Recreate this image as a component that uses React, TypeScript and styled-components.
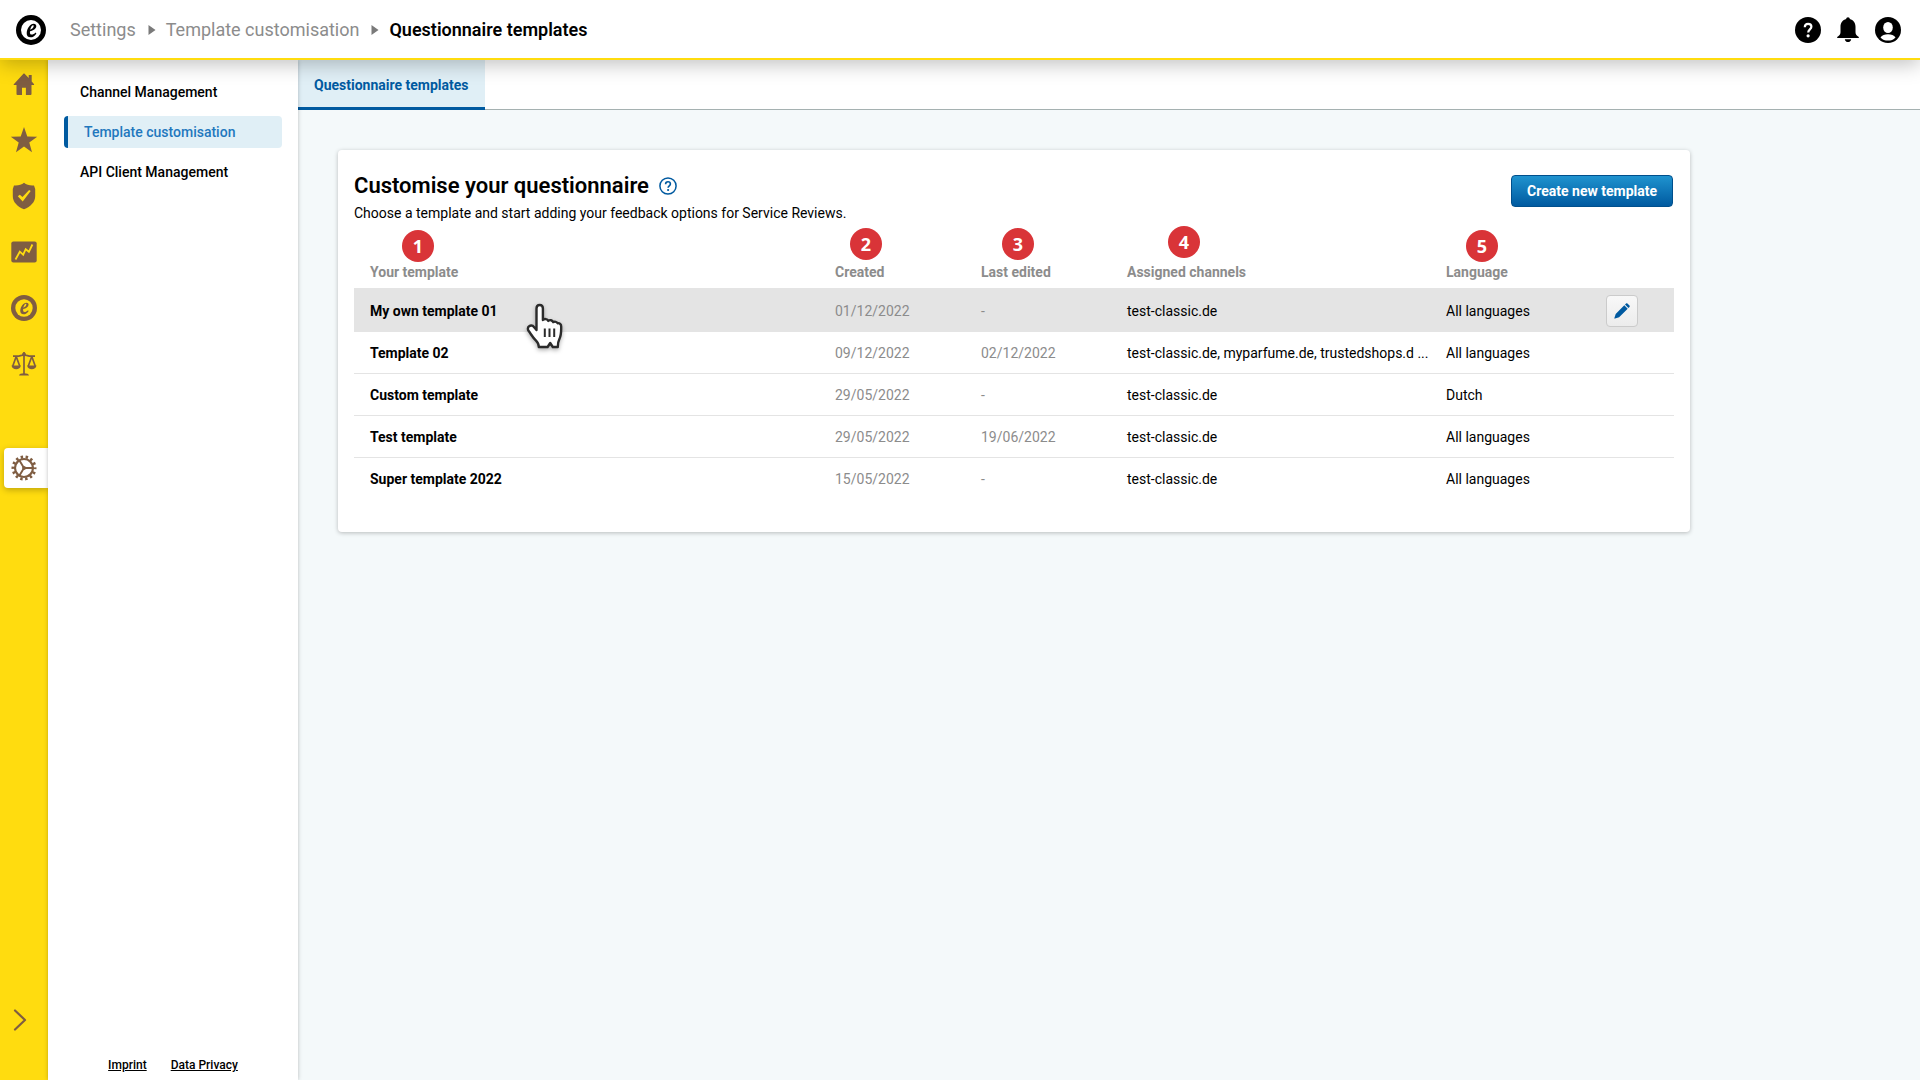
import React from "react";
import styled, { createGlobalStyle } from "styled-components";

const GlobalStyle = createGlobalStyle`
  *, *::before, *::after { box-sizing: border-box; }
  body { margin: 0; font-family: Roboto, "Liberation Sans", sans-serif; font-size: 14px; line-height: 20px; color: #000; background: #f4f9fa; }
  button { font: inherit; cursor: pointer; }
  h1, p, ul, ol { margin: 0; padding: 0; list-style: none; }
  svg { display: block; flex: none; }
`;

const BROWN = "#7f5d42";
const BLUE = "#005aa0";

const Page = styled.div`
  min-height: 100vh;
  display: flex;
  flex-direction: column;
`;

const TopBar = styled.header`
  position: relative;
  z-index: 2;
  height: 60px;
  display: flex;
  align-items: center;
  justify-content: space-between;
  padding: 2px 16px 0;
  background: #fff;
  border-bottom: 2px solid #ffdc0f;
  box-shadow: 0 4px 20px rgba(0, 0, 0, 0.25);
`;

const TopLeft = styled.div`
  display: flex;
  align-items: center;
  gap: 24px;
`;

const Crumbs = styled.ol`
  display: flex;
  align-items: center;
  gap: 10px;
  font-size: 18px;
  line-height: 24px;
`;

const Crumb = styled.li`
  display: flex;
  align-items: center;
  gap: 12px;
`;

const CrumbLink = styled.a`
  color: #8c8c8c;
  text-decoration: none;
`;

const CrumbCurrent = styled.span`
  font-weight: 600;
`;

const TopActions = styled.div`
  display: flex;
  gap: 8px;
`;

const IconButton = styled.button`
  width: 32px;
  height: 32px;
  padding: 0;
  border: 0;
  background: none;
  display: grid;
  place-items: center;
`;

const Body = styled.div`
  flex: 1;
  display: flex;
`;

const Rail = styled.nav`
  width: 48px;
  display: flex;
  flex-direction: column;
  justify-content: space-between;
  background: #ffdc0f;
  padding: 4px 0 44px;
`;

const RailList = styled.ul`
  display: flex;
  flex-direction: column;
`;

const RailItem = styled.li<{ $last?: boolean }>`
  height: ${(p) => (p.$last ? 104 : 56)}px;
`;

const RailLink = styled.a<{ $active?: boolean }>`
  height: 40px;
  display: flex;
  align-items: center;
  justify-content: center;
  margin-left: ${(p) => (p.$active ? 4 : 0)}px;
  padding-right: ${(p) => (p.$active ? 4 : 0)}px;
  border-radius: 4px 0 0 4px;
  background: ${(p) => (p.$active ? "#fff" : "transparent")};
  box-shadow: ${(p) => (p.$active ? "0 2px 6px rgba(0, 0, 0, 0.25)" : "none")};
`;

const Expand = styled(IconButton)`
  margin-left: 4px;
`;

const SideMenu = styled.aside`
  position: relative;
  z-index: 1;
  width: 250px;
  display: flex;
  flex-direction: column;
  justify-content: space-between;
  padding: 16px 16px 5px;
  background: #fff;
  box-shadow: 0 0 4px rgba(0, 0, 0, 0.25);
`;

const MenuList = styled.ul`
  display: flex;
  flex-direction: column;
  gap: 8px;
`;

const MenuLink = styled.a<{ $active?: boolean }>`
  height: 32px;
  display: flex;
  align-items: center;
  padding-left: 16px;
  border-left: ${(p) => (p.$active ? `4px solid ${BLUE}` : "0")};
  border-radius: 4px;
  background: ${(p) => (p.$active ? "#e0eff6" : "transparent")};
  color: ${(p) => (p.$active ? "#1f78be" : "#000")};
  font-weight: 500;
  text-decoration: none;
`;

const Legal = styled.div`
  display: flex;
  justify-content: center;
  gap: 24px;
  font-size: 12px;
  font-weight: 500;
`;

const LegalLink = styled.a`
  color: #000;
`;

const Main = styled.main`
  flex: 1;
  min-width: 0;
`;

const Tabs = styled.div`
  height: 50px;
  display: flex;
  background: #fff;
  box-shadow: inset 0 -1px 0 #a5b1b1;
`;

const Tab = styled.a`
  height: 50px;
  padding: 0 16px;
  line-height: 50px;
  background: #e0eff6;
  box-shadow: inset 0 -3px 0 ${BLUE};
  color: ${BLUE};
  font-weight: 700;
  text-decoration: none;
`;

const Card = styled.section`
  max-width: 1352px;
  margin: 40px;
  padding: 16px 16px 32px;
  background: #fff;
  border-radius: 4px;
  box-shadow: 0 1px 4px rgba(0, 0, 0, 0.25);
`;

const CardHead = styled.div`
  display: flex;
  justify-content: space-between;
  align-items: flex-start;
  padding: 9px 1px 0 0;
`;

const TitleRow = styled.div`
  display: flex;
  align-items: center;
  gap: 8px;
`;

const Title = styled.h1`
  font-size: 22px;
  line-height: 22px;
  font-weight: 600;
`;

const HelpButton = styled(IconButton)`
  width: 22px;
  height: 22px;
`;

const Intro = styled.p`
  padding-top: 6px;
`;

const PrimaryButton = styled.button`
  height: 32px;
  padding: 0 15px;
  border: 1px solid #004f8c;
  border-radius: 4px;
  background: linear-gradient(#1f93cf, ${BLUE});
  color: #fff;
  font-weight: 700;
`;

const Table = styled.table`
  width: 100%;
  margin-top: 24px;
  table-layout: fixed;
  border-collapse: separate;
  border-spacing: 0;
  text-align: left;
`;

const Col = styled.col<{ $w?: number }>`
  width: ${(p) => (p.$w ? `${p.$w}px` : "auto")};
`;

const HeadCell = styled.th`
  position: relative;
  height: 41px;
  padding: 9px 0 0 16px;
  color: #8c8c8c;
  font-weight: 700;
`;

const Marker = styled.span<{ $x: number; $y: number }>`
  position: absolute;
  left: ${(p) => p.$x}px;
  top: ${(p) => p.$y}px;
  width: 32px;
  height: 32px;
  border-radius: 50%;
  background: #d93438;
  color: #fff;
  font: 700 18px/32px "Open Sans", "Noto Sans", sans-serif;
  text-align: center;
`;

const Row = styled.tr<{ $hover?: boolean }>`
  height: ${(p) => (p.$hover ? 44 : 42)}px;
  background: ${(p) => (p.$hover ? "#e4e4e4" : "transparent")};

  td { border-bottom: ${(p) => (p.$hover ? "0" : "1px solid #e4e4e4")}; }
  &:last-child td { border-bottom-color: transparent; }
`;

const Cell = styled.td<{ $muted?: boolean; $strong?: boolean }>`
  position: relative;
  padding: 1px 0 0 16px;
  color: ${(p) => (p.$muted ? "#8c8c8c" : "#000")};
  font-weight: ${(p) => (p.$strong ? 700 : 400)};
  white-space: nowrap;
`;

const EditButton = styled.button`
  width: 32px;
  height: 32px;
  padding: 0;
  display: grid;
  place-items: center;
  border: 1px solid #cbcbcb;
  border-radius: 4px;
  background: linear-gradient(#f8f8f8, #ececec);
`;

const Pointer = styled.svg`
  position: absolute;
  left: 172px;
  top: 15px;
  z-index: 1;
  filter: drop-shadow(0 2px 2px rgba(0, 0, 0, 0.3));
`;

const Mark = ({ size, color, back }: { size: number; color: string; back: string }) => (
  <svg width={size} height={size} viewBox="0 0 30 30" aria-hidden="true">
    <circle cx="15" cy="15" r="15" fill={color} />
    <circle cx="15" cy="15" r="10" fill={back} />
    <path
      d="M20.400 18.400c-1.700 2.500-3.700 3.900-5.900 3.900-2.500 0-4-1.600-3.800-4.300.3-4.500 3.400-9.200 7-9.200 1.700 0 2.700.9 2.600 2.400-.2 2.700-3 4.300-6.300 5-.3 2.200.2 3.400 1.700 3.400 1.300 0 2.600-.7 3.900-2.100zM14.200 14.700c2-.6 3.300-2 3.500-3.600.1-.6-.1-.9-.6-.9-1.100 0-2.400 2.100-2.900 4.500z"
      fill={color}
    />
  </svg>
);

const Arrow = () => (
  <svg width="8" height="10" viewBox="0 0 8 10" aria-hidden="true">
    <path d="M0.500 0L7.500 5L0.500 10z" fill="#7a7a7a" />
  </svg>
);

const HomeIcon = () => (
  <svg width="24" height="24" viewBox="0 0 24 24" fill={BROWN} aria-hidden="true">
    <path d="M11.400 1.700L1.800 12.200c-.3.500-.1.900.5.900H4.500v9c0 .6.300.9.900.9h4.600v-7.200h3.900V23h4.700c.6 0 .9-.3.900-.9v-9h2c.6 0 .8-.5.400-1L19.700 9.400V3h-3v3L12.600 1.700c-.4-.4-.8-.4-1.200 0z" />
  </svg>
);

const StarIcon = () => (
  <svg width="28" height="28" viewBox="0 0 28 28" fill={BROWN} aria-hidden="true">
    <path d="M14 1l3.300 9.400L27.200 10.700 19.300 16.500 22 26.200 14 20.400 6 26.200 8.700 16.500.8 10.700 10.700 10.400z" />
  </svg>
);

const ShieldIcon = () => (
  <svg width="24" height="28" viewBox="0 0 24 28" aria-hidden="true">
    <path d="M12 .8c2.600 2.300 6 3 10 2.700l1.200 3.500v7c0 6-4.400 10.600-11.200 13.200C5.200 24.600.8 20 .8 14V7L2 3.500C6 3.800 9.400 3.100 12 .8z" fill={BROWN} />
    <path d="M5.800 14.200l2-1.500 2.700 2.300 6.600-6.900 1.600 1-8 10.400z" fill="#ffdc0f" />
  </svg>
);

const ChartIcon = () => (
  <svg width="26" height="22" viewBox="0 0 26 22" aria-hidden="true">
    <rect x="0.300" y="0.500" width="25.400" height="21" rx="2" fill={BROWN} />
    <path d="M4.500 18.500l4.300-7.800 3.400 3 2.500-5.500 3.200 2.600 3.500-7.300" fill="none" stroke="#ffdc0f" strokeWidth="1.800" />
  </svg>
);

const ScaleIcon = () => (
  <svg width="26" height="26" viewBox="0 0 26 26" fill="none" stroke={BROWN} strokeWidth="1.700" aria-hidden="true">
    <path d="M13 1v22M2 5.200h4.500c2.500 0 3.500-1.200 6.500-1.200s4 1.200 6.500 1.200H24M5.200 5.500L1.800 15M5.200 5.500L8.700 15M20.800 5.500L17.300 15M20.800 5.500L24.200 15" />
    <path d="M.5 14.500h9.400c-.5 2.500-2.200 3.700-4.700 3.700S1 17 .5 14.500zM16.100 14.500h9.400c-.5 2.500-2.200 3.700-4.700 3.700s-4.200-1.200-4.700-3.700zM8 24.500c.3-1.500 2-2.200 5-2.200s4.700.7 5 2.200z" fill={BROWN} stroke="none" />
    <circle cx="13" cy="3.500" r="2" fill={BROWN} stroke="none" />
  </svg>
);

const GearIcon = () => (
  <svg width="26" height="26" viewBox="0 0 26 26" fill="none" stroke={BROWN} aria-hidden="true">
    <circle cx="13" cy="13" r="9" strokeWidth="2.200" />
    <circle cx="13" cy="13" r="11" strokeWidth="3" strokeDasharray="2.400 2.537" strokeDashoffset="1.200" />
    <path d="M13 13h9M13 13L8.300 5.200M13 13l-4.700 7.800" strokeWidth="1.900" />
    <circle cx="13" cy="13" r="1.900" fill={BROWN} stroke="none" />
  </svg>
);

const ChevronIcon = () => (
  <svg width="14" height="24" viewBox="0 0 14 24" fill="none" stroke={BROWN} strokeWidth="2.200" strokeLinecap="round" strokeLinejoin="round" aria-hidden="true">
    <path d="M2 2.500l10 9.500-10 9.500" />
  </svg>
);

const HelpIcon = () => (
  <svg width="26" height="26" viewBox="0 0 26 26" aria-hidden="true">
    <circle cx="13" cy="13" r="13" fill="#000" />
    <path d="M9.800 10.300c0-2.200 1.300-3.500 3.300-3.500s3.300 1.200 3.300 3c0 2.600-3.200 2.700-3.200 5.700" fill="none" stroke="#fff" strokeWidth="2.200" />
    <circle cx="13.100" cy="18.800" r="1.600" fill="#fff" />
  </svg>
);

const BellIcon = () => (
  <svg width="24" height="26" viewBox="0 0 24 26" aria-hidden="true">
    <path d="M12 .3c1 0 1.800.7 1.800 1.700 3.500.9 5.700 3.800 5.700 7.700v5.500c0 2.300 1.300 3.600 3.300 4.700v1H1.200v-1c2-1.100 3.300-2.400 3.300-4.700V9.700c0-3.900 2.200-6.800 5.700-7.700 0-1 .8-1.700 1.800-1.700zM8.800 22.200h6.400c-.3 1.900-1.500 2.800-3.200 2.800s-2.900-.9-3.200-2.800z" />
  </svg>
);

const UserIcon = () => (
  <svg width="26" height="26" viewBox="0 0 26 26" aria-hidden="true">
    <circle cx="13" cy="13" r="13" fill="#000" />
    <ellipse cx="13" cy="10.500" rx="4.800" ry="5.500" fill="#fff" />
    <path d="M5.500 20.400c1.500-2 4.100-3.100 7.500-3.100s6 1.100 7.500 3.100c-2 2.200-4.600 3.200-7.500 3.200s-5.500-1-7.500-3.200z" fill="#fff" />
  </svg>
);

const HelpOutlineIcon = () => (
  <svg width="18" height="18" viewBox="0 0 18 18" fill="none" stroke={BLUE} aria-hidden="true">
    <circle cx="9" cy="9" r="8.100" strokeWidth="1.500" />
    <path d="M6.600 7.200c0-1.600 1-2.500 2.400-2.500s2.400.9 2.400 2.200c0 1.800-2.300 2-2.300 3.900" strokeWidth="1.600" />
    <circle cx="9.100" cy="13" r="1.100" fill={BLUE} stroke="none" />
  </svg>
);

const PencilIcon = () => (
  <svg width="16" height="16" viewBox="0 0 16 16" fill={BLUE} aria-hidden="true">
    <path d="M10.300 2.300l3.400 3.400-8.600 8.600-4 1.300c-.5.200-.8-.1-.7-.6l1.300-4.100zM11 1.600l1.100-1.100c.4-.4.900-.4 1.300 0l2.100 2.100c.4.400.4.900 0 1.300L14.400 5z" />
  </svg>
);

const HandPointer = () => (
  <Pointer width="38" height="48" viewBox="0 0 38 48" aria-hidden="true">
    <path
      d="M10.500 27V5.500C10.500 3.500 11.800 2 13.700 2s3.200 1.500 3.200 3.500V17c1.500-1.600 4.500-1.200 5.300.9 1.600-1.300 4.300-.8 5 1.200 1.400-.8 3.500-.3 4.400 1.100 1.900-.3 3.700 1.200 3.600 3.500-.1 4.500.2 8.300-1.700 12-1.300 2.400-1.600 4.400-1.700 8.300h-5l-2.600-4-2.600 4h-8.800c0-3.200-.6-4.300-3-6.600-3.400-3.300-4.700-6.200-7.100-9.300-1.200-1.600-1.100-3.800.4-4.800 1.700-1.200 3.900-.6 5.300 1.200z"
      fill="#fff"
      stroke="#2b2b2b"
      strokeWidth="2.400"
      strokeLinejoin="round"
    />
    <path d="M18.800 25.500v8.500M23.500 25.500v8.500M28.200 25.500v8.500" stroke="#2b2b2b" strokeWidth="2" />
  </Pointer>
);

const railItems = [
  { label: "Home", icon: <HomeIcon /> },
  { label: "Reviews", icon: <StarIcon /> },
  { label: "Protection", icon: <ShieldIcon /> },
  { label: "Insights", icon: <ChartIcon /> },
  { label: "Trustmark", icon: <Mark size={26} color={BROWN} back="#ffdc0f" /> },
  { label: "Legal", icon: <ScaleIcon /> },
];

const menuItems = ["Channel Management", "Template customisation", "API Client Management"];

const columns = [
  { label: "Your template", x: 48, y: -17 },
  { label: "Created", width: 146, x: 31, y: -19 },
  { label: "Last edited", width: 146, x: 37, y: -19 },
  { label: "Assigned channels", width: 319, x: 57, y: -21 },
  { label: "Language", width: 160, x: 36, y: -17 },
];

const templates = [
  { name: "My own template 01", created: "01/12/2022", edited: "-", channels: "test-classic.de", language: "All languages" },
  { name: "Template 02", created: "09/12/2022", edited: "02/12/2022", channels: "test-classic.de, myparfume.de, trustedshops.d ...", language: "All languages" },
  { name: "Custom template", created: "29/05/2022", edited: "-", channels: "test-classic.de", language: "Dutch" },
  { name: "Test template", created: "29/05/2022", edited: "19/06/2022", channels: "test-classic.de", language: "All languages" },
  { name: "Super template 2022", created: "15/05/2022", edited: "-", channels: "test-classic.de", language: "All languages" },
];

export default function App() {
  return (
    <Page>
      <GlobalStyle />
      <TopBar>
        <TopLeft>
          <Mark size={30} color="#000" back="#fff" />
          <Crumbs>
            <Crumb><CrumbLink href="#settings">Settings</CrumbLink><Arrow /></Crumb>
            <Crumb><CrumbLink href="#customisation">Template customisation</CrumbLink><Arrow /></Crumb>
            <Crumb><CrumbCurrent>Questionnaire templates</CrumbCurrent></Crumb>
          </Crumbs>
        </TopLeft>
        <TopActions>
          <IconButton aria-label="Help"><HelpIcon /></IconButton>
          <IconButton aria-label="Notifications"><BellIcon /></IconButton>
          <IconButton aria-label="Account"><UserIcon /></IconButton>
        </TopActions>
      </TopBar>
      <Body>
        <Rail>
          <RailList>
            {railItems.map((item, i) => (
              <RailItem key={item.label} $last={i === railItems.length - 1}>
                <RailLink href="#" aria-label={item.label}>{item.icon}</RailLink>
              </RailItem>
            ))}
            <RailItem>
              <RailLink href="#" aria-label="Settings" $active><GearIcon /></RailLink>
            </RailItem>
          </RailList>
          <Expand aria-label="Expand menu"><ChevronIcon /></Expand>
        </Rail>
        <SideMenu>
          <MenuList>
            {menuItems.map((label, i) => (
              <li key={label}><MenuLink href="#" $active={i === 1}>{label}</MenuLink></li>
            ))}
          </MenuList>
          <Legal>
            <LegalLink href="#imprint">Imprint</LegalLink>
            <LegalLink href="#privacy">Data Privacy</LegalLink>
          </Legal>
        </SideMenu>
        <Main>
          <Tabs><Tab href="#templates">Questionnaire templates</Tab></Tabs>
          <Card>
            <CardHead>
              <div>
                <TitleRow>
                  <Title>Customise your questionnaire</Title>
                  <HelpButton aria-label="About templates"><HelpOutlineIcon /></HelpButton>
                </TitleRow>
                <Intro>Choose a template and start adding your feedback options for Service Reviews.</Intro>
              </div>
              <PrimaryButton>Create new template</PrimaryButton>
            </CardHead>
            <Table>
              <colgroup>
                {columns.map((c) => <Col key={c.label} $w={c.width} />)}
                <Col $w={84} />
              </colgroup>
              <thead>
                <tr>
                  {columns.map((c, i) => (
                    <HeadCell key={c.label} scope="col">
                      {c.label}
                      <Marker $x={c.x} $y={c.y}>{i + 1}</Marker>
                    </HeadCell>
                  ))}
                  <HeadCell aria-label="Actions" />
                </tr>
              </thead>
              <tbody>
                {templates.map((t, i) => (
                  <Row key={t.name} $hover={i === 0}>
                    <Cell $strong>{t.name}{i === 0 && <HandPointer />}</Cell>
                    <Cell $muted>{t.created}</Cell>
                    <Cell $muted>{t.edited}</Cell>
                    <Cell>{t.channels}</Cell>
                    <Cell>{t.language}</Cell>
                    <Cell>{i === 0 && <EditButton aria-label="Edit template"><PencilIcon /></EditButton>}</Cell>
                  </Row>
                ))}
              </tbody>
            </Table>
          </Card>
        </Main>
      </Body>
    </Page>
  );
}
